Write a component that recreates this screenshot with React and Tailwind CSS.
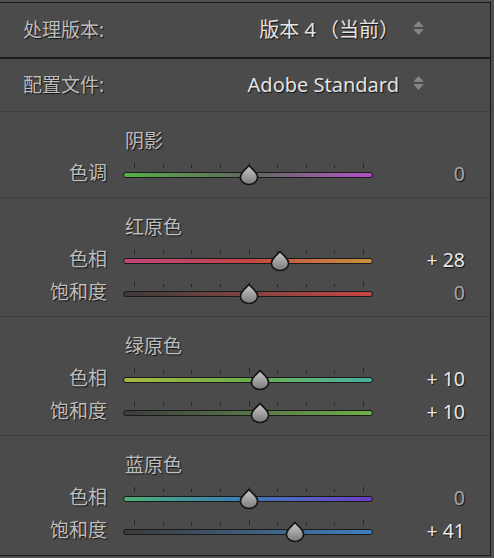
import React from "react";

const FONT = { fontFamily: '"Noto Sans", "Noto Sans CJK SC", sans-serif' };
const SHADOW = "[text-shadow:1px_1px_1px_rgba(0,0,0,0.75)]";
const TICKS = [0, 1, 2, 3, 4, 5, 6, 7, 8];

function Arrows() {
  return (
    <svg width="11" height="14" viewBox="0 0 11 14" className="ml-[14px] -mt-[4px]">
      <path d="M5.5 0.5 L10 5.5 L1 5.5 Z" fill="#868686" stroke="#868686" strokeWidth="0.8" strokeLinejoin="round" />
      <path d="M5.5 13.5 L10 8.5 L1 8.5 Z" fill="#868686" stroke="#868686" strokeWidth="0.8" strokeLinejoin="round" />
    </svg>
  );
}

function Thumb() {
  return (
    <svg width="22" height="22" viewBox="0 0 22 22">
      <defs>
        <linearGradient id="tg" x1="0" y1="0" x2="0" y2="1">
          <stop offset="0" stopColor="#cbcbcb" />
          <stop offset="1" stopColor="#7a7a7a" />
        </linearGradient>
      </defs>
      <path
        d="M11 1.5 C12.8 4 19.6 8 19.6 13.2 A8.6 7.3 0 0 1 2.4 13.2 C2.4 8 9.2 4 11 1.5 Z"
        fill="url(#tg)"
        stroke="#141414"
        strokeWidth="1.7"
        strokeLinejoin="round"
      />
    </svg>
  );
}

function Slider({ value, grad }) {
  const center = 126 + value * 1.12;
  return (
    <div className="relative h-[33px] w-[250px] shrink-0">
      {TICKS.map((i) => {
        const tall = i === 0 || i === 4 || i === 8;
        return (
          <div
            key={i}
            className={
              tall
                ? "absolute top-[6px] h-[5px] w-px bg-[#262626]"
                : "absolute top-[8px] h-[3px] w-px bg-[#262626]"
            }
            style={{ left: 11 + i * 28.625 }}
          />
        );
      })}
      <div className={"absolute left-0 right-0 top-[15px] h-[6px] rounded-full border border-[#1a1a1a] " + grad} />
      <div className="absolute top-[7px]" style={{ left: center - 11 }}>
        <Thumb />
      </div>
    </div>
  );
}

function Row({ label, value, grad }) {
  const text = value === 0 ? "0" : value > 0 ? "+ " + value : "- " + Math.abs(value);
  return (
    <div className="flex items-center h-[33px]">
      <div className={"w-[107px] text-right text-[#bdbdbd] " + SHADOW}>{label}</div>
      <div className="ml-[16px]">
        <Slider value={value} grad={grad} />
      </div>
      <div
        className={
          "flex-1 text-right pr-[25px] text-[19.5px] " +
          SHADOW +
          (value === 0 ? " text-[#a6a6a6]" : " text-[#e8e8e8]")
        }
      >
        {text}
      </div>
    </div>
  );
}

function Section({ title, rows }) {
  return (
    <div className="pt-[18px] pb-[7px] border-t border-[#404040]">
      <div className={"h-[22px] mb-[5px] pl-[125px] flex items-center text-[#bdbdbd] " + SHADOW}>{title}</div>
      {rows.map((r) => (
        <Row key={r.label} {...r} />
      ))}
    </div>
  );
}

export default function App() {
  return (
    <div className="w-[494px] h-[558px] bg-[#505050] pt-[2px]" style={FONT}>
      <div className="w-[491px] h-[554px] bg-[#4b4b4b] border-t border-r border-b border-[#1a1a1a] text-[19px] leading-none overflow-hidden">
        <div className="h-[56px] flex items-center pl-[23px] pr-[66px] border-b-2 border-[#1a1a1a]">
          <div className={"text-[#bdbdbd] " + SHADOW}>处理版本:</div>
          <div className={"ml-auto text-[#e4e4e4] text-[20px] " + SHADOW}>
            版本 4<span className="ml-[3px]">（当前）</span>
          </div>
          <Arrows />
        </div>
        <div className="h-[52px] flex items-center pl-[23px] pr-[66px]">
          <div className={"text-[#bdbdbd] " + SHADOW}>配置文件:</div>
          <div className={"ml-auto text-[#e4e4e4] text-[20px] " + SHADOW}>Adobe Standard</div>
          <Arrows />
        </div>
        <Section
          title="阴影"
          rows={[{ label: "色调", value: 0, grad: "bg-linear-to-r from-[#55b043] via-[#5e665c] to-[#b24ec8]" }]}
        />
        <Section
          title="红原色"
          rows={[
            { label: "色相", value: 28, grad: "bg-linear-to-r from-[#c0457c] via-[#c44545] to-[#c8903c]" },
            { label: "饱和度", value: 0, grad: "bg-linear-to-r from-[#3a3a3a] to-[#c84444]" },
          ]}
        />
        <Section
          title="绿原色"
          rows={[
            { label: "色相", value: 10, grad: "bg-linear-to-r from-[#a8b840] via-[#6cae4a] to-[#48b0a0]" },
            { label: "饱和度", value: 10, grad: "bg-linear-to-r from-[#3c3c3c] to-[#70b048]" },
          ]}
        />
        <Section
          title="蓝原色"
          rows={[
            { label: "色相", value: 0, grad: "bg-linear-to-r from-[#50b070] via-[#3a78b8] to-[#6a3cc8]" },
            { label: "饱和度", value: 41, grad: "bg-linear-to-r from-[#3a3a3a] to-[#3c80c0]" },
          ]}
        />
      </div>
    </div>
  );
}
